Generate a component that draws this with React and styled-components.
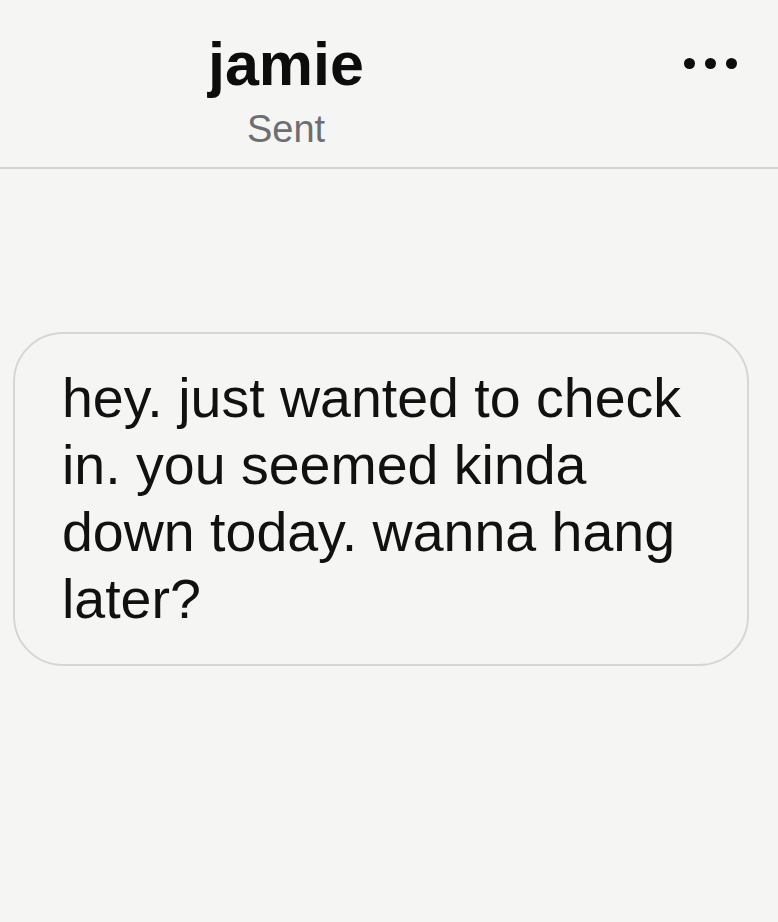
import React from "react";
import styled, { createGlobalStyle } from "styled-components";

const Global = createGlobalStyle`
  html, body { margin: 0; padding: 0; background: #f5f5f3; }
  body { font-family: "Liberation Sans", Arial, sans-serif; color: #111; }
`;

const Screen = styled.div`
  width: 778px;
  height: 922px;
  background: #f5f5f3;
  display: flex;
  flex-direction: column;
  overflow: hidden;
`;

const Header = styled.header`
  display: grid;
  grid-template-columns: 572px 1fr;
  align-items: start;
  padding: 31px 41px 16px 0;
  border-bottom: 2px solid #d3d3d1;
`;

const TitleBlock = styled.div`
  display: flex;
  flex-direction: column;
  align-items: center;
  gap: 10px;
`;

const Name = styled.div`
  font-size: 61px;
  line-height: 66px;
  font-weight: 700;
  color: #0d0d0d;
`;

const Status = styled.div`
  font-size: 38px;
  line-height: 44px;
  color: #6d6e72;
`;

const More = styled.div`
  justify-self: end;
  display: flex;
  gap: 10px;
  margin-top: 27px;
`;

const Dot = styled.span`
  width: 11px;
  height: 11px;
  border-radius: 50%;
  background: #0d0d0d;
`;

const Thread = styled.main`
  display: flex;
  flex-direction: column;
  padding: 163px 29px 0 13px;
`;

const Bubble = styled.div`
  border: 2px solid #d6d6d4;
  border-radius: 50px;
  padding: 31px 40px 31px 47px;
  font-size: 55.5px;
  line-height: 67px;
  color: #111;
`;

export default function App() {
  return (
    <Screen>
      <Global />
      <Header>
        <TitleBlock>
          <Name>jamie</Name>
          <Status>Sent</Status>
        </TitleBlock>
        <More aria-label="More options">
          <Dot />
          <Dot />
          <Dot />
        </More>
      </Header>
      <Thread>
        <Bubble>
          hey. just wanted to check in. you seemed kinda down today. wanna hang later?
        </Bubble>
      </Thread>
    </Screen>
  );
}
